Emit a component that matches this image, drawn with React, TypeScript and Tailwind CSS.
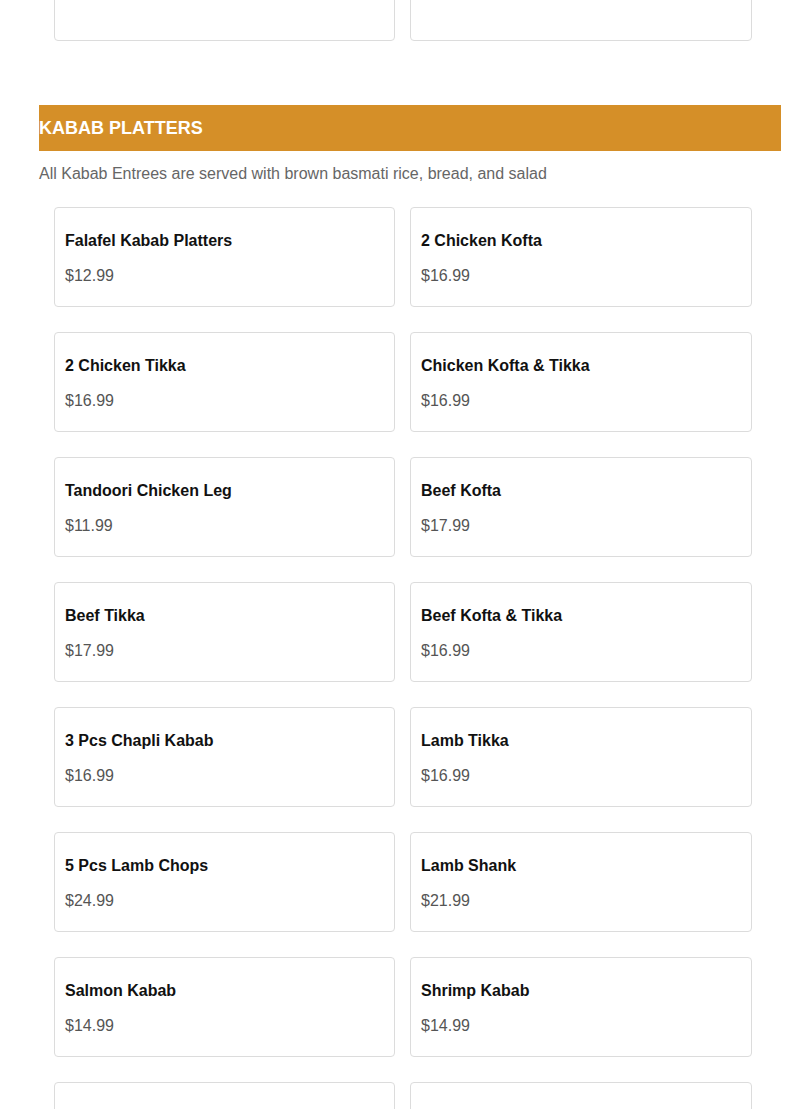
type Item = {
  name: string;
  price: string;
};

const platters: Item[] = [
  { name: "Falafel Kabab Platters", price: "$12.99" },
  { name: "2 Chicken Kofta", price: "$16.99" },
  { name: "2 Chicken Tikka", price: "$16.99" },
  { name: "Chicken Kofta & Tikka", price: "$16.99" },
  { name: "Tandoori Chicken Leg", price: "$11.99" },
  { name: "Beef Kofta", price: "$17.99" },
  { name: "Beef Tikka", price: "$17.99" },
  { name: "Beef Kofta & Tikka", price: "$16.99" },
  { name: "3 Pcs Chapli Kabab", price: "$16.99" },
  { name: "Lamb Tikka", price: "$16.99" },
  { name: "5 Pcs Lamb Chops", price: "$24.99" },
  { name: "Lamb Shank", price: "$21.99" },
  { name: "Salmon Kabab", price: "$14.99" },
  { name: "Shrimp Kabab", price: "$14.99" },
  { name: "Veg Kabab", price: "$12.99" },
  { name: "Mix Kabab Platter", price: "$29.99" },
];

function MenuCard({ item, faded }: { item: Item; faded?: boolean }) {
  return (
    <div className="h-[100px] rounded-[4px] border border-[#dcdcdc] bg-white px-[10px] pt-[24px]">
      <h3
        className={
          faded
            ? "text-[16px] leading-[18px] font-bold text-[#ddd]"
            : "text-[16px] leading-[18px] font-bold text-[#111]"
        }
      >
        {item.name}
      </h3>
      <p
        className={
          faded
            ? "mt-[17px] text-[16px] leading-[18px] text-[#ddd]"
            : "mt-[17px] text-[16px] leading-[18px] text-[#555]"
        }
      >
        {item.price}
      </p>
    </div>
  );
}

export default function App() {
  return (
    <div
      className="min-h-screen bg-white overflow-hidden"
      style={{ fontFamily: '"Liberation Sans", Arial, sans-serif' }}
    >
      <div className="ml-[39px] w-[742px]">
        {/* previous section, last row */}
        <div className="grid grid-cols-[341px_342px] gap-x-[15px] pl-[15px] -mt-[59px]">
          <div className="h-[100px] rounded-[4px] border border-[#dcdcdc]" />
          <div className="h-[100px] rounded-[4px] border border-[#dcdcdc]" />
        </div>

        {/* KABAB PLATTERS */}
        <div className="mt-[64px] flex h-[46px] items-center bg-[#d58f28]">
          <h2 className="text-[18px] font-bold text-white">KABAB PLATTERS</h2>
        </div>

        <p className="mt-[14px] text-[16px] leading-[18px] text-[#666]">
          All Kabab Entrees are served with brown basmati rice, bread, and salad
        </p>

        <div className="mt-[24px] grid grid-cols-[341px_342px] gap-x-[15px] gap-y-[25px] pl-[15px]">
          {platters.map((item, i) => (
            <MenuCard key={item.name} item={item} faded={i >= 14} />
          ))}
        </div>
      </div>
    </div>
  );
}
